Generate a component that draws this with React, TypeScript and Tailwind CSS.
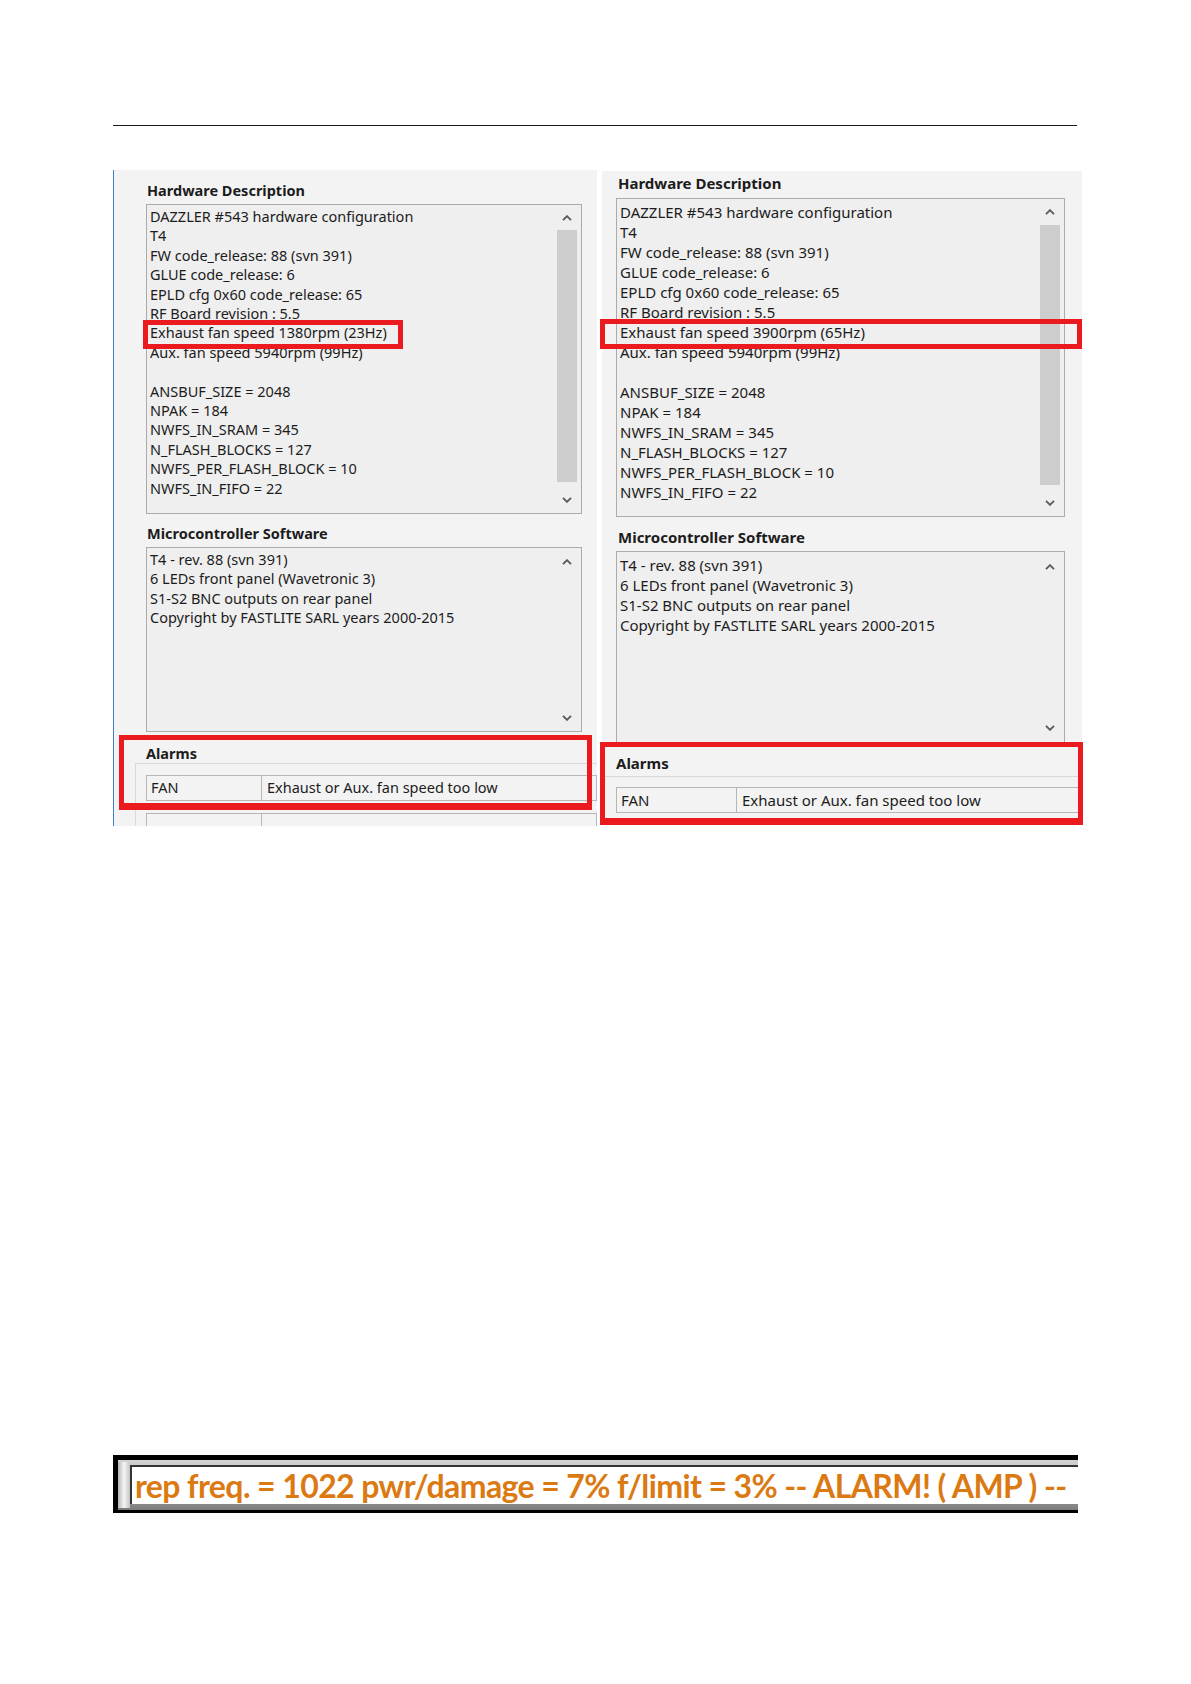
import React from 'react';

const hwLines = [
  'DAZZLER #543 hardware configuration',
  'T4',
  'FW code_release: 88 (svn 391)',
  'GLUE code_release: 6',
  'EPLD cfg 0x60 code_release: 65',
  'RF Board revision : 5.5',
  'EXHAUST',
  'Aux. fan speed 5940rpm (99Hz)',
  '',
  'ANSBUF_SIZE = 2048',
  'NPAK = 184',
  'NWFS_IN_SRAM = 345',
  'N_FLASH_BLOCKS = 127',
  'NWFS_PER_FLASH_BLOCK = 10',
  'NWFS_IN_FIFO = 22',
];

const swLines = [
  'T4 - rev. 88 (svn 391)',
  '6 LEDs front panel (Wavetronic 3)',
  'S1-S2 BNC outputs on rear panel',
  'Copyright by FASTLITE SARL years 2000-2015',
];

const Chevron = ({ up }: { up?: boolean }) => (
  <svg width="10" height="6" viewBox="0 0 10 6" className="text-[#5a5a5a]">
    <path
      d={up ? 'M1 5.2 L5 1.2 L9 5.2' : 'M1 0.8 L5 4.8 L9 0.8'}
      fill="none"
      stroke="currentColor"
      strokeWidth="1.9"
    />
  </svg>
);

interface ScrollBoxProps {
  lines: string[];
  exhaust?: string;
  className: string;
  textClass: string;
  upClass: string;
  downClass: string;
  thumb?: boolean;
}

const ScrollBox: React.FC<ScrollBoxProps> = ({ lines, exhaust, className, textClass, upClass, downClass, thumb }) => {
  return (
    <div className={`flex border border-[#ababab] bg-[#efefef] ${className}`}>
      <div className={`flex-1 pl-[3px] ${textClass}`}>
        {lines.map((l, i) => (
          <div key={i} className="whitespace-pre">
            {l === 'EXHAUST' ? exhaust : l || '\u00a0'}
          </div>
        ))}
      </div>
      <div className="w-[24px] shrink-0 flex flex-col pr-[4px]">
        <div className={`flex justify-center ${upClass}`}>
          <Chevron up />
        </div>
        <div className={`flex-1 ${thumb ? 'bg-[#cdcdcd]' : ''}`} />
        <div className={`flex justify-center ${downClass}`}>
          <Chevron />
        </div>
      </div>
    </div>
  );
};

const AlarmRow = ({ first, textClass, fan, msg }: { first: string; textClass: string; fan: string; msg: string }) => (
  <div className={`flex h-[26px] ${textClass}`}>
    <div className={`${first} shrink-0 border border-[#b7b7b7] flex items-center pl-[4px]`}>{fan}</div>
    <div className="flex-1 border border-l-0 border-[#b7b7b7] flex items-center pl-[5px] whitespace-nowrap">{msg}</div>
  </div>
);

export default function App() {
  return (
    <div className="w-[1191px] min-h-[1684px] bg-white text-[#1c1c1c] font-['Noto_Sans',sans-serif] pl-[113px] pt-[125px]">
      <div className="w-[964px] h-px bg-[#1a1a1a]" />

      <div className="relative mt-[44px] flex items-start gap-[5px] w-[970px]">
        {/* left screenshot */}
        <div className="w-[484px] h-[656px] overflow-hidden bg-[#f3f3f3] border-l border-[#3f82c6] pt-[10px]">
          <div className="pl-[33px] text-[14.5px] font-bold leading-[20px]">Hardware Description</div>
          <ScrollBox
            lines={hwLines}
            exhaust="Exhaust fan speed 1380rpm (23Hz)"
            className="ml-[32px] mt-[4px] w-[436px] h-[310px]"
            textClass="pt-[2px] text-[14.5px] leading-[19.4px]"
            upClass="h-[25px] items-center"
            downClass="h-[31px] items-start pt-[15px]"
            thumb
          />
          <div className="pl-[33px] mt-[9px] text-[14.5px] font-bold leading-[20px]">Microcontroller Software</div>
          <ScrollBox
            lines={swLines}
            className="ml-[32px] mt-[4px] w-[436px] h-[185px]"
            textClass="pt-[2px] text-[14.5px] leading-[19.4px]"
            upClass="h-[28px] items-center"
            downClass="h-[26px] items-center"
          />
          <div className="pl-[32px] mt-[11px] text-[14.5px] font-bold leading-[20px]">Alarms</div>
          <div className="ml-[21px] border-t border-l border-[#d9d9d9] pt-[11px] pl-[10px] h-[80px]">
            <AlarmRow first="w-[116px]" textClass="text-[14.5px]" fan="FAN" msg="Exhaust or Aux. fan speed too low" />
            <div className="mt-[12px]">
              <AlarmRow first="w-[116px]" textClass="text-[14.5px]" fan="" msg="" />
            </div>
          </div>
        </div>

        {/* right screenshot */}
        <div className="mt-px w-[480px] h-[654px] overflow-hidden bg-[#f3f3f3] pt-[2px]">
          <div className="pl-[16px] text-[15px] font-bold leading-[20px]">Hardware Description</div>
          <ScrollBox
            lines={hwLines}
            exhaust="Exhaust fan speed 3900rpm (65Hz)"
            className="ml-[14px] mt-[5px] w-[449px] h-[319px]"
            textClass="pt-[3px] text-[15px] leading-[20px]"
            upClass="h-[26px] items-center"
            downClass="h-[31px] items-start pt-[15px]"
            thumb
          />
          <div className="pl-[16px] mt-[10px] text-[15px] font-bold leading-[20px]">Microcontroller Software</div>
          <ScrollBox
            lines={swLines}
            className="ml-[14px] mt-[4px] w-[449px] h-[194px]"
            textClass="pt-[3px] text-[15px] leading-[20px]"
            upClass="h-[30px] items-center"
            downClass="h-[32px] items-center"
          />
          <div className="pl-[14px] mt-[8px] text-[15px] font-bold leading-[20px]">Alarms</div>
          <div className="mt-[3px] ml-[2px] border-t border-l border-[#d9d9d9] pt-[10px] pl-[11px] h-[60px]">
            <AlarmRow first="w-[121px]" textClass="text-[15px]" fan="FAN" msg="Exhaust or Aux. fan speed too low" />
          </div>
        </div>

        {/* highlight frames */}
        <div className="absolute left-[30px] top-[150px] w-[260px] h-[29px] border-[5px] border-[#ea1a1f]" />
        <div className="absolute left-[487px] top-[149px] w-[482px] h-[30px] border-[5px] border-[#ea1a1f]" />
        <div className="absolute left-[6px] top-[565px] w-[473px] h-[75px] border-[5px] border-b-[7px] border-[#ea1a1f]" />
        <div className="absolute left-[487px] top-[572px] w-[483px] h-[83px] border-[5px] border-b-[7px] border-[#ea1a1f]" />
      </div>

      {/* status bar */}
      <div className="mt-[629px] w-[965px] h-[58px] bg-black pt-[5px] pb-[3px] pl-[5px]">
        <div className="h-full flex bg-gradient-to-b from-[#d2d2d2] via-[#b8b8b8] to-[#7c7c7c] pt-[5px] pb-[6px]">
          <div className="w-[12px] shrink-0 -mt-[3px] -mb-[4px] bg-gradient-to-r from-[#b5b5b5] via-[#f6f6f6] to-[#c4c4c4]" />
          <div className="flex-1 min-w-0 bg-white border-l-2 border-t-2 border-[#333333] flex items-center pl-[3px] whitespace-nowrap font-['Lato',sans-serif] font-bold text-[32px] tracking-[-0.6px] leading-none text-[#db7a12]">
            rep freq. = 1022 pwr/damage = 7% f/limit = 3% -- ALARM! ( AMP ) --
          </div>
        </div>
      </div>
    </div>
  );
}
